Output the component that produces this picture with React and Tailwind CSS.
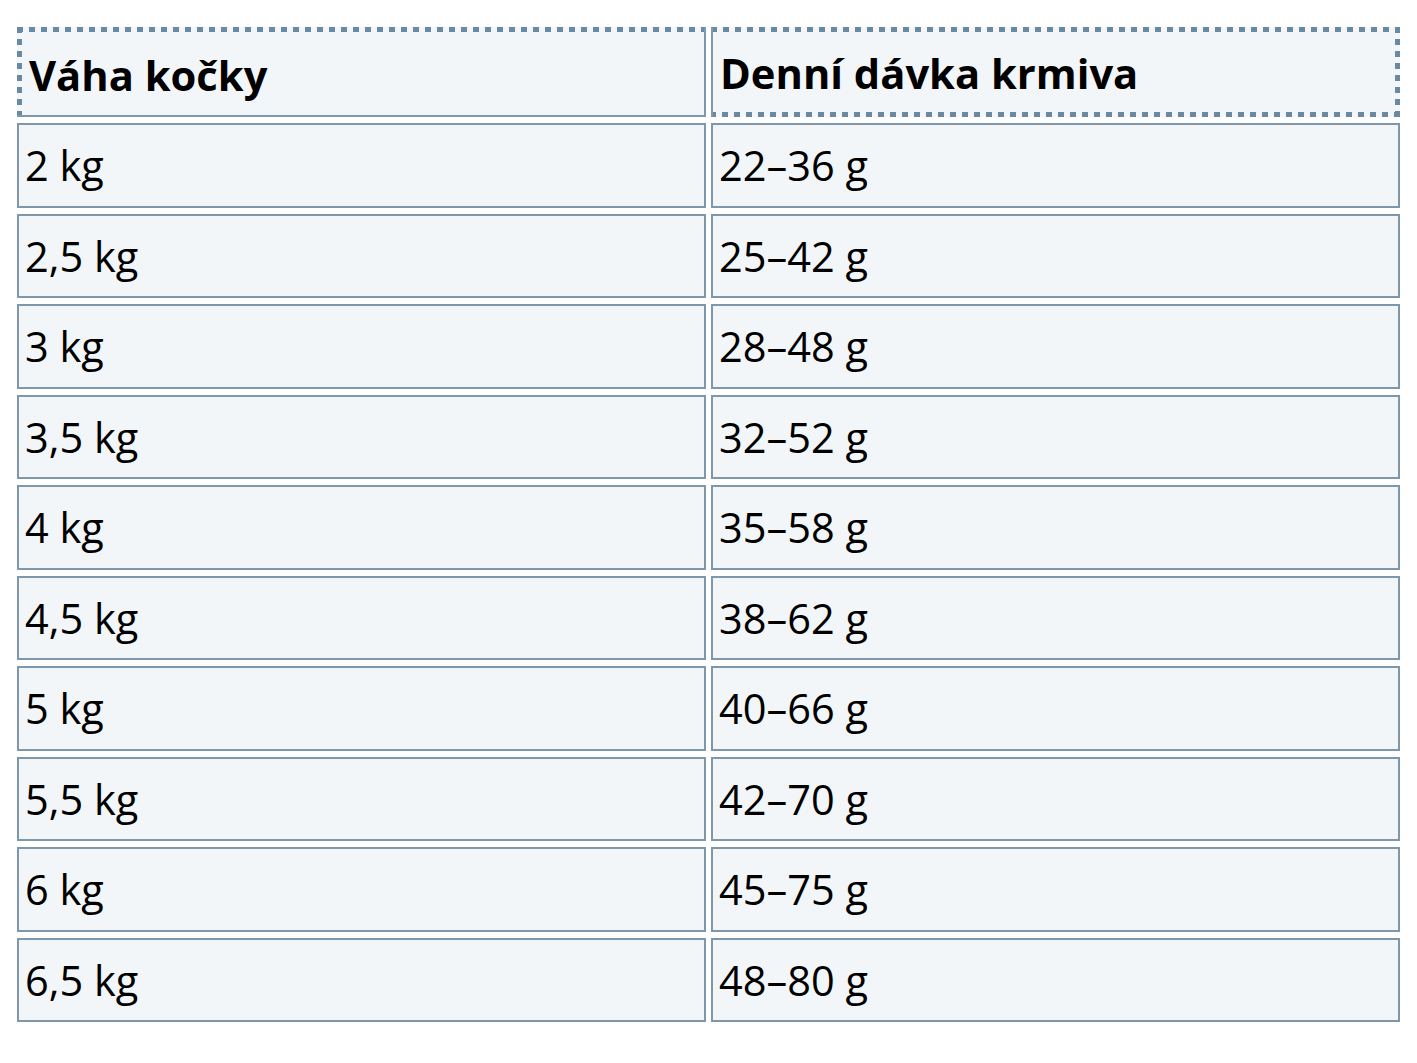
import React from 'react'

const rows = [
  ['2 kg', '22–36 g'],
  ['2,5 kg', '25–42 g'],
  ['3 kg', '28–48 g'],
  ['3,5 kg', '32–52 g'],
  ['4 kg', '35–58 g'],
  ['4,5 kg', '38–62 g'],
  ['5 kg', '40–66 g'],
  ['5,5 kg', '42–70 g'],
  ['6 kg', '45–75 g'],
  ['6,5 kg', '48–80 g'],
]

const App = () => {
  return (
    <div className="min-h-screen bg-white px-[17px] pt-[27px] font-['Open_Sans',sans-serif] text-black">
      <div className="grid grid-cols-2 gap-x-[5px] gap-y-[6px]">
        {/* Header - dotted focus-like outline drawn with gradients */}
        <div className="flex h-[90px] items-center border-r-2 border-b-2 border-[#7f97ab] pt-[8px] pl-[12px] text-[41.7px] font-bold [background:linear-gradient(90deg,#6a89a2_6px,transparent_6px)_left_top/12px_5px_repeat-x,linear-gradient(180deg,#6a89a2_6px,transparent_6px)_left_top/5px_12px_repeat-y,#f3f6f8]">
          Váha kočky
        </div>
        <div className="flex h-[90px] items-center border-l-2 border-[#7f97ab] pt-[3px] pl-[7px] text-[41.7px] font-bold [background:linear-gradient(90deg,#6a89a2_6px,transparent_6px)_left_top/12px_5px_repeat-x_border-box,linear-gradient(180deg,transparent_6px,#6a89a2_6px)_right_bottom/5px_12px_repeat-y_border-box,linear-gradient(90deg,transparent_6px,#6a89a2_6px)_right_bottom/12px_5px_repeat-x_border-box,#f3f6f8]">
          Denní dávka krmiva
        </div>

        {/* Body */}
        {rows.map(([weight, dose]) => (
          <React.Fragment key={weight}>
            <div className="flex h-[84.5px] items-center border-2 border-[#7f97ab] bg-[#f3f6f8] pl-[6px] text-[41.5px]">
              {weight}
            </div>
            <div className="flex h-[84.5px] items-center border-2 border-[#7f97ab] bg-[#f3f6f8] pl-[6px] text-[41.5px]">
              {dose}
            </div>
          </React.Fragment>
        ))}
      </div>
    </div>
  )
}

export default App
